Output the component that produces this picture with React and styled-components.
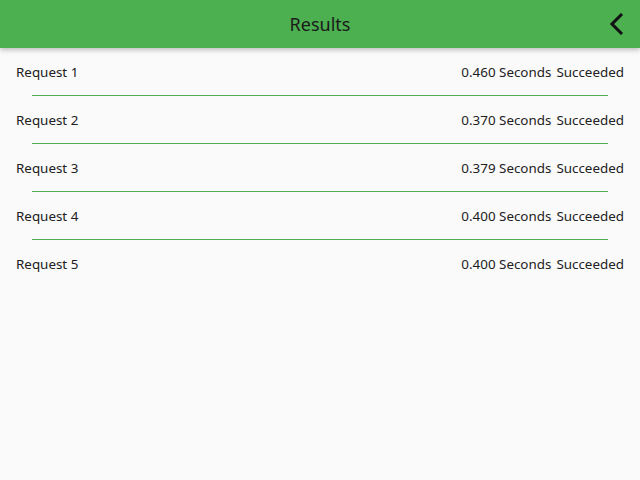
import React from "react";
import styled, { createGlobalStyle } from "styled-components";

const Global = createGlobalStyle`
  html, body { margin: 0; padding: 0; background: #fafafa; }
  body { font-family: "Noto Sans", "Open Sans", sans-serif; color: #212121; }
`;

const Page = styled.div`
  width: 640px;
  height: 480px;
  background: #fafafa;
  display: flex;
  flex-direction: column;
`;

const Header = styled.header`
  height: 48px;
  flex-shrink: 0;
  background: #4caf50;
  display: grid;
  grid-template-columns: 48px 1fr 48px;
  align-items: center;
  box-shadow: 0 2px 5px rgba(0, 0, 0, 0.25);
  position: relative;
  z-index: 1;
`;

const Title = styled.h1`
  grid-column: 2;
  margin: 0;
  text-align: center;
  font-size: 18px;
  font-weight: 400;
  color: #1b1b1b;
`;

const BackButton = styled.button`
  grid-column: 3;
  background: none;
  border: none;
  padding: 0 16px 1px 0;
  display: flex;
  align-items: center;
  justify-content: flex-end;
  height: 100%;
  cursor: pointer;
`;

const List = styled.ul`
  list-style: none;
  margin: 0;
  padding: 0;
  display: flex;
  flex-direction: column;
`;

const Row = styled.li`
  height: 48px;
  display: flex;
  flex-direction: column;
`;

const RowContent = styled.div`
  flex: 1;
  display: flex;
  align-items: center;
  justify-content: space-between;
  padding: 1px 16px 0;
  font-size: 13.4px;
`;

const Stats = styled.div`
  display: flex;
  gap: 5px;
`;

const Divider = styled.div`
  height: 1px;
  margin: 0 32px;
  background: ${(p) => (p.$hidden ? "transparent" : "#4caf50")};
`;

const results = [
  { name: "Request 1", time: "0.460" },
  { name: "Request 2", time: "0.370" },
  { name: "Request 3", time: "0.379" },
  { name: "Request 4", time: "0.400" },
  { name: "Request 5", time: "0.400" },
];

export default function App() {
  return (
    <Page>
      <Global />
      <Header>
        <Title>Results</Title>
        <BackButton aria-label="Back">
          <svg width="15" height="22" viewBox="0 0 15 22">
            <path d="M13 1 L3 11 L13 21" fill="none" stroke="#111" strokeWidth="3" />
          </svg>
        </BackButton>
      </Header>
      <List>
        {results.map((r, i) => (
          <Row key={r.name}>
            <RowContent>
              <span>{r.name}</span>
              <Stats>
                <span>{r.time} Seconds</span>
                <span>Succeeded</span>
              </Stats>
            </RowContent>
            <Divider $hidden={i === results.length - 1} />
          </Row>
        ))}
      </List>
    </Page>
  );
}
